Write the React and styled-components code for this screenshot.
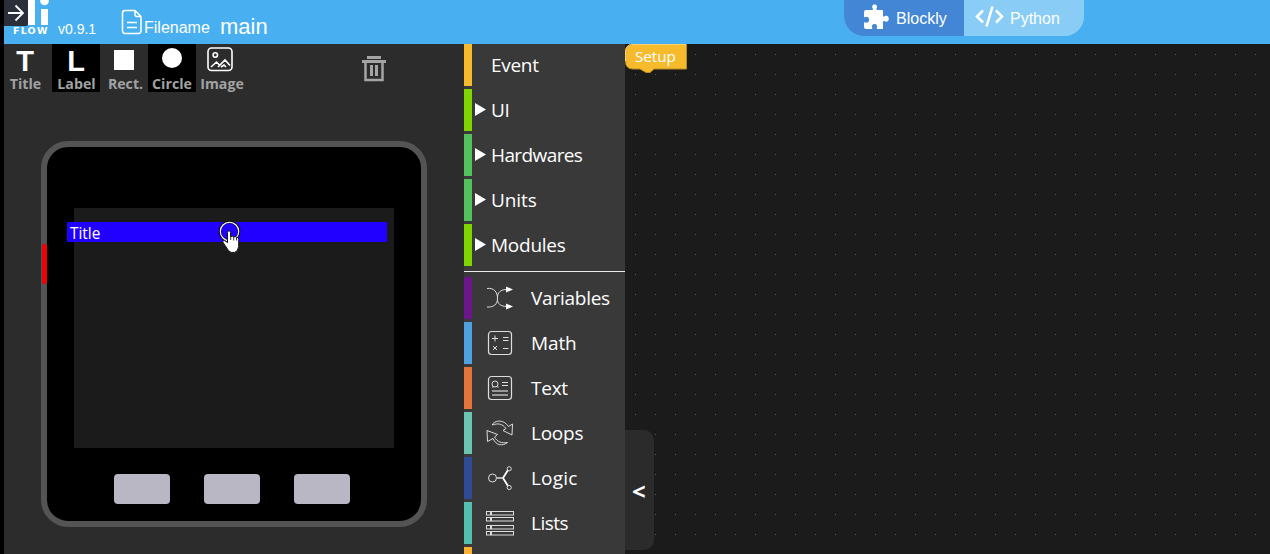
import React from 'react';
import styled, { createGlobalStyle } from 'styled-components';

const Global = createGlobalStyle`
  * { box-sizing: border-box; }
  body { margin: 0; background: #000; overflow: hidden; }
  svg { display: block; flex: none; }
`;

const ui = '"Open Sans", "Noto Sans", sans-serif';
const arial = '"Liberation Sans", Arial, sans-serif';

const Page = styled.div`
  height: 554px;
  padding-left: 4px;
  display: flex;
  flex-direction: column;
  color: #fff;
  font-family: ${ui};
  overflow: hidden;
`;
const Header = styled.header`
  position: relative;
  height: 44px;
  flex: none;
  display: flex;
  background: #48b0f1;
  font-family: ${arial};
  white-space: nowrap;
`;
const Brand = styled.div`
  width: 50px;
  height: 44px;
`;
const Wordmark = styled.div`
  padding-left: 9px;
  font-family: "DejaVu Sans", sans-serif;
  font-size: 9.500px;
  font-weight: 700;
  line-height: 11px;
  letter-spacing: 1.200px;
`;
const Collapse = styled.button`
  position: absolute;
  left: 0;
  top: 0;
  width: 24px;
  height: 26px;
  padding: 0;
  border: 0;
  border-radius: 0 0 2px 0;
  background: #2b2f3a;
`;
const Version = styled.span`
  padding: 21px 0 0 4px;
  width: 67px;
  font-size: 14px;
  line-height: 17px;
`;
const FileIcon = styled.div`
  width: 23px;
  padding-top: 9px;
`;
const FileLabel = styled.span`
  padding-top: 18px;
  width: 76px;
  font-size: 16px;
  line-height: 20px;
`;
const FileName = styled.span`
  width: 624px;
  padding-top: 14px;
  font-size: 22px;
  line-height: 26px;
`;
const Switch = styled.div`
  display: flex;
  width: 240px;
  height: 36px;
  border-radius: 0 0 20px 20px;
  overflow: hidden;
  background: #89cdf6;
`;
const Mode = styled.div`
  display: flex;
  align-items: center;
  width: 120px;
  padding: 1px 0 0 ${p => p.$pad}px;
  gap: ${p => p.$gap}px;
  background: ${p => (p.$active ? '#4386d5' : '#89cdf6')};
  font-size: 16px;
  svg { margin-bottom: 3px; }
`;
const Body = styled.main`
  display: flex;
  flex: 1;
  min-height: 0;
`;
const Designer = styled.section`
  width: 460px;
  background: #2c2c2c;
`;
const Toolbar = styled.div`
  height: 97px;
  display: flex;
`;
const Tool = styled.div`
  width: ${p => p.$w || 48}px;
  height: 48px;
  background: ${p => (p.$dark ? '#000' : 'transparent')};
  display: flex;
  flex-direction: column;
  align-items: center;
  white-space: nowrap;
`;
const ToolGlyph = styled.div`
  height: 30px;
  flex: none;
  display: flex;
  padding-top: ${p => p.$top || 0}px;
  padding-right: ${p => p.$right || 0}px;
  font-family: ${arial};
  font-weight: 700;
  font-size: 29px;
  line-height: 34px;
`;
const ToolName = styled.div`
  flex: none;
  font-size: 14.2px;
  line-height: 20px;
  font-weight: 700;
  color: #a2a2a2;
  padding-right: ${p => p.$right || 0}px;
  padding-left: ${p => p.$left || 0}px;
`;
const Trash = styled.div`
  padding: 11px 0 0 114px;
`;
const Device = styled.div`
  position: relative;
  margin-left: 37px;
  width: 386px;
  height: 386px;
  border: 6px solid #545454;
  border-radius: 27px;
  background: #000;
  padding: 61px 27px 0;
`;
const Screen = styled.div`
  position: relative;
  width: 320px;
  height: 240px;
  background: #1b1b1b;
`;
const TitleBar = styled.div`
  position: absolute;
  left: -7px;
  top: 14px;
  width: 320px;
  height: 20px;
  background: #2100ff;
  padding-left: 3px;
  font-size: 15.4px;
  line-height: 24px;
`;
const Cursor = styled.div`
  position: absolute;
  left: 144px;
  top: 12px;
`;
const PowerLight = styled.div`
  position: absolute;
  left: -5px;
  top: 97px;
  width: 5px;
  height: 40px;
  border-radius: 2px;
  background: #ee0003;
`;
const Keys = styled.div`
  display: flex;
  gap: 34px;
  padding: 26px 0 0 40px;
`;
const Key = styled.div`
  width: 56px;
  height: 30px;
  border-radius: 4px;
  background: #bab7c5;
`;
const Toolbox = styled.nav`
  width: 161px;
  background: #393939;
  overflow: hidden;
`;
const Group = styled.div`
  display: flex;
  flex-direction: column;
  gap: 3px;
`;
const Divider = styled.div`
  height: 1px;
  margin: 5px 0;
  background: #ececec;
`;
const Row = styled.div`
  height: 42px;
  display: flex;
  align-items: center;
  border-left: 8px solid ${p => p.$color};
`;
const Arrow = styled.div`
  width: 19px;
  padding: 0 0 2px 3px;
`;
const RowIcon = styled.div`
  width: 59px;
  padding-left: 13px;
`;
const RowLabel = styled.span`
  font-size: 19px;
  line-height: 42px;
  letter-spacing: ${p => p.$track ?? -0.25}px;
`;
const Workspace = styled.section`
  flex: 1;
  position: relative;
  background: #1b1b1b;
`;
const Grid = styled.div`
  height: 100%;
  background: radial-gradient(circle at 0.5px 0.5px, #5c5c5c 0.6px, transparent 0.7px) 10px 10px / 20px 20px;
`;
const SetupBlock = styled.div`
  position: absolute;
  left: 0;
  top: 0;
  width: 62px;
  height: 30px;
  font-size: 15.2px;
  line-height: 25px;
`;
const BlockShape = styled.svg`
  position: absolute;
  left: 0;
  top: 0;
`;
const BlockText = styled.span`
  position: relative;
  left: 10px;
`;
const Drawer = styled.div`
  position: absolute;
  left: 0;
  top: 386px;
  width: 29px;
  height: 120px;
  border-radius: 0 10px 10px 0;
  background: #2b2b2b;
  padding-left: 7px;
  font-size: 24px;
  font-weight: 700;
  line-height: 122px;
`;

const line = { fill: 'none', stroke: '#ddd', strokeWidth: 1 };
const icons = {
  variables: (
    <svg width="28" height="26" {...line}>
      <path d="M2 3.500C9 2.500 12.500 7 12.500 13.500C12.500 19 9 22.500 2 22M12.500 13.500C12 7 16 4.500 22 4.500M12.500 13.500C12 19 16 21.500 22 21.500" />
      <path d="M21 1.500L28 4.500L21 7.500ZM21 18.500L28 21.500L21 24.500Z" fill="#fff" stroke="none" />
    </svg>
  ),
  math: (
    <svg width="28" height="26" {...line}>
      <rect x="3.500" y="1.500" width="23" height="23" rx="3" strokeWidth="1.200" />
      <path d="M7 8.500h6M10 5.500v6M18 7.500h5.500M18 10.500h5.500M8 16l4 4M12 16l-4 4M18 18.500h5.500" />
    </svg>
  ),
  text: (
    <svg width="28" height="26" {...line}>
      <rect x="3.500" y="1.500" width="23" height="23" rx="3" strokeWidth="1.200" />
      <circle cx="10" cy="9" r="3" />
      <path d="M7 12h1.500M12 12h1.500M17 7.500h6M17 10.500h6" />
      <path d="M7 16h16M7 20h16" stroke="#999" strokeWidth="2" />
    </svg>
  ),
  loops: (
    <svg width="29" height="26" {...line}>
      <path d="M7.500 4C12-.5 19 0 23.500 6.500L27.500 4L27 15L18 10.500L21 8.500C17 3.500 13 3 7.500 5Z" />
      <path d="M22.500 22.500C17 26.500 11 25.500 8 18.500L2.500 21.500L2 10.500L12.500 14.500L9.500 17C12 22 17 23.500 22.500 22.500Z" />
    </svg>
  ),
  logic: (
    <svg width="28" height="26" {...line}>
      <circle cx="7.500" cy="13" r="4" />
      <path d="M12 13h6" strokeWidth="1.500" />
      <path d="M18 13l5-8M18 13l5 8" stroke="#fff" strokeWidth="1.800" />
      <circle cx="24.200" cy="3.800" r="2.100" />
      <circle cx="24.200" cy="22.500" r="2.100" />
    </svg>
  ),
  lists: (
    <svg width="30" height="26" {...line}>
      {[1.5, 7.5, 15.5, 21.5].map(y => (
        <g key={y}>
          <rect x="1.500" y={y} width="4" height="3.500" />
          <rect x="6.500" y={y} width="22" height="3.500" />
        </g>
      ))}
    </svg>
  ),
};

const categories = [
  ['Event', '#f5bb2d', false, -0.3],
  ['UI', '#80d500', true],
  ['Hardwares', '#55c15e', true, -0.6],
  ['Units', '#55c15e', true, -0.1],
  ['Modules', '#80d500', true],
];
const builtins = [
  ['Variables', '#6b168b', 'variables'],
  ['Math', '#4fa1df', 'math', -0.1],
  ['Text', '#e2763a', 'text'],
  ['Loops', '#6bc5b0', 'loops'],
  ['Logic', '#2f4b96', 'logic', 0.2],
  ['Lists', '#55bfaf', 'lists', -0.5],
];

export default function App() {
  return (
    <Page>
      <Global />
      <Header>
        <Brand>
          <svg width="50" height="25" fill="#fff">
            <path d="M24 0h7v25h-7zM37 9h7v16h-7z" />
            <circle cx="40.500" cy="1" r="4.300" />
          </svg>
          <Wordmark>FLOW</Wordmark>
        </Brand>
        <Collapse aria-label="Expand">
          <svg width="24" height="26" fill="none" stroke="#fff" strokeWidth="1.800">
            <path d="M4 13h15M11.500 5.500L19 13l-7.500 7.500" />
          </svg>
        </Collapse>
        <Version>v0.9.1</Version>
        <FileIcon>
          <svg width="22" height="26" fill="none" stroke="#fff" strokeWidth="1.500">
            <path d="M4 1.500h10l6 6v14q0 3-3 3H4q-2.500 0-2.500-3V4q0-2.500 2.500-2.500zM14 1.500v4q0 2 2 2h4M6 13.500h10M6 18.500h10" />
          </svg>
        </FileIcon>
        <FileLabel>Filename</FileLabel>
        <FileName>main</FileName>
        <Switch>
          <Mode $active $pad={19} $gap={7}>
            <svg width="26" height="26" viewBox="0 0 26 26" fill="#fff">
              <path d="M3 6h6c1 0 1.300-.5.800-1.400C8.500 2.200 9.500.5 11.500.5s3.300 1.700 2 4.100C13 5.500 13.300 6 14.300 6H20v5.500c0 1.200.7 1.400 1.600.8 2.200-1.200 4.200.2 4.200 2.500s-2 3.800-4.200 2.500c-.9-.6-1.600-.3-1.600.8V25h-5.200c-1.100 0-1.300-.6-.9-1.500.8-1.700-.4-3.500-2.400-3.500s-3.100 1.800-2.300 3.500c.4.900 0 1.500-1 1.500H3q-2 0-2-2v-3.500c0-1.200.6-1.500 1.500-1 1.800.9 3.600-.4 3.600-2.700S4.300 12.200 2.500 13C1.600 13.500 1 13.200 1 12V8q0-2 2-2z" />
            </svg>
            Blockly
          </Mode>
          <Mode $pad={11} $gap={6}>
            <svg width="29" height="24" fill="none" stroke="#fff" strokeWidth="2.500">
              <path d="M8 5.500L2 11.500l6 6M21 5.500l6 6-6 6M17.500 1.500l-6 20" />
            </svg>
            Python
          </Mode>
        </Switch>
      </Header>
      <Body>
        <Designer>
          <Toolbar>
            <Tool><ToolGlyph $right={6}>T</ToolGlyph><ToolName $right={5}>Title</ToolName></Tool>
            <Tool $dark><ToolGlyph>L</ToolGlyph><ToolName $left={1}>Label</ToolName></Tool>
            <Tool><ToolGlyph $top={6}><svg width="20" height="20"><rect width="20" height="20" fill="#fff" /></svg></ToolGlyph><ToolName $left={3}>Rect.</ToolName></Tool>
            <Tool $dark><ToolGlyph $top={4}><svg width="20" height="20"><circle cx="10" cy="10" r="10" fill="#fff" /></svg></ToolGlyph><ToolName>Circle</ToolName></Tool>
            <Tool $w={52}>
              <ToolGlyph $top={3} $right={4}>
                <svg width="26" height="25" fill="none" stroke="#fff" strokeWidth="1.600">
                  <rect x="1" y="1" width="24" height="22.500" rx="3.500" />
                  <circle cx="8.300" cy="8" r="2.200" />
                  <path d="M4 20l5.500-5 3.500 3.500M11 20l7-7 5 5.500M14 20l3-2 2 2" />
                </svg>
              </ToolGlyph>
              <ToolName>Image</ToolName>
            </Tool>
            <Trash>
              <svg width="24" height="27" fill="none" stroke="#a5a5a5">
                <path d="M5 2.500h14" strokeWidth="3" />
                <path d="M0 6.500h24" strokeWidth="3" />
                <path d="M3.500 8v17h17V8" strokeWidth="2.500" />
                <path d="M9.500 10v11M14.500 10v11" strokeWidth="3" />
              </svg>
            </Trash>
          </Toolbar>
          <Device>
            <PowerLight />
            <Screen>
              <TitleBar>Title</TitleBar>
              <Cursor>
                <svg width="24" height="34">
                  <circle cx="11.500" cy="11.500" r="9.500" fill="none" stroke="#111" strokeWidth="2.600" />
                  <circle cx="11.500" cy="11.500" r="9.200" fill="none" stroke="#fff" strokeWidth="1.100" />
                  <path transform="translate(-1 0)" d="M10.500 12.500q0-1.700 1.500-1.700t1.500 1.700v4q2.300-.6 3.300.3 2.300-.5 3 .7 2-.2 1.900 1.900v7q-.8 5-4 6h-3.500q-3-1-4.500-4.500l-4-6q0-1.800 2-1.300l2.800 2z" fill="#fff" stroke="#111" strokeWidth="1" />
                  <path d="M12.700 15.500v4.500M15.700 16.500v4M18.500 17.500v3" stroke="#222" strokeWidth=".9" />
                </svg>
              </Cursor>
            </Screen>
            <Keys><Key /><Key /><Key /></Keys>
          </Device>
        </Designer>
        <Toolbox>
          <Group>
            {categories.map(([name, color, open, track]) => (
              <Row key={name} $color={color}>
                <Arrow>{open && <svg width="11" height="13"><path d="M0 0L11 6.500L0 13z" fill="#fff" /></svg>}</Arrow>
                <RowLabel $track={track}>{name}</RowLabel>
              </Row>
            ))}
          </Group>
          <Divider />
          <Group>
            {builtins.map(([name, color, icon, track]) => (
              <Row key={name} $color={color}>
                <RowIcon>{icons[icon]}</RowIcon>
                <RowLabel $track={track}>{name}</RowLabel>
              </Row>
            ))}
            <Row $color="#fcb133" />
          </Group>
        </Toolbox>
        <Workspace>
          <Grid />
          <SetupBlock>
            <BlockShape width="62" height="31">
              <path d="M8 .5H61.500V25H29L25 28.500H21L15 25H8Q.5 25 .5 17V8Q.5.5 8 .5z" fill="#f5bb2d" stroke="#b98d23" />
              <path d="M.5 17V8Q.5.5 8 .5H61" fill="none" stroke="#f8cf6c" />
            </BlockShape>
            <BlockText>Setup</BlockText>
          </SetupBlock>
          <Drawer>&lt;</Drawer>
        </Workspace>
      </Body>
    </Page>
  );
}
